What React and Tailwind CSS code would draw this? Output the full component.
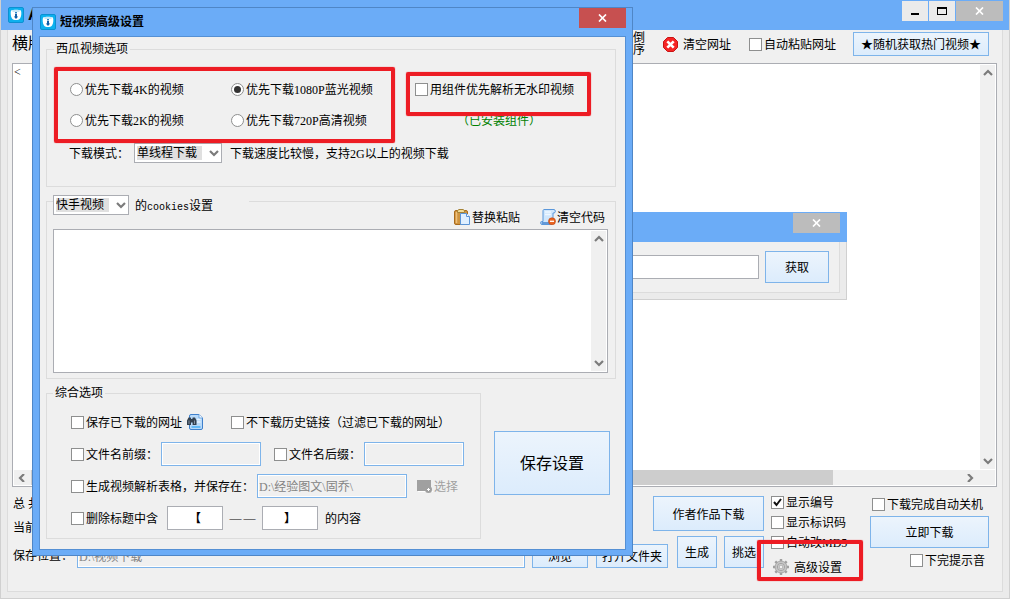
import { useState } from 'react'

const PATHS = {
  up: 'M1 6 L5 2 L9 6',
  down: 'M1 2 L5 6 L9 2',
  left: 'M7 0 L3 4 L7 8',
  right: 'M3 0 L7 4 L3 8',
}

function Chevron({ dir, className = '' }) {
  return (
    <svg viewBox="0 0 10 8" className={`h-2 w-2.5 shrink-0 text-[#7b7b7b] ${className}`} fill="none" stroke="currentColor" strokeWidth="2.2">
      <path d={PATHS[dir]} />
    </svg>
  )
}

function AppIcon() {
  return (
    <svg viewBox="0 0 16 16" className="h-4 w-4 shrink-0">
      <rect x="0.5" y="0.5" width="15" height="15" rx="1.5" fill="#0cb0ee" stroke="#0b90d2" />
      <path d="M3 3.5 C5 2.5 11 2.5 13 3.5 C13.6 6 13.4 9.500 12 11.500 C10.500 13.500 5.500 13.500 4 11.500 C2.600 9.500 2.400 6 3 3.500Z" fill="#fff" />
      <path d="M4.500 4 H11.500" stroke="#8fd0ee" />
      <path d="M8 5 V6.600" stroke="#1b78bd" strokeWidth="1.800" />
      <path d="M7 7 H9 V9.500 H10.200 L8 12 L5.800 9.500 H7Z" fill="#0f5fa8" />
    </svg>
  )
}

function CloseGlyph() {
  return (
    <svg viewBox="0 0 9 8" className="h-2 w-[9px]" stroke="#fff" strokeWidth="1.7">
      <path d="M1 0.500 L8 7.500 M8 0.500 L1 7.500" />
    </svg>
  )
}

function CloseButton({ active }) {
  return (
    <button
      aria-label="关闭"
      className={`flex h-5 w-[47px] items-center justify-center ${active ? 'bg-[#c75050]' : 'bg-[#bcbcbc]'}`}
    >
      <CloseGlyph />
    </button>
  )
}

function ClearIcon() {
  return (
    <svg viewBox="0 0 15 15" className="h-[15px] w-[15px]">
      <path d="M4.500 0.500 H10.500 L14.500 4.500 V10.500 L10.500 14.500 H4.500 L0.500 10.500 V4.500Z" fill="#f52525" stroke="#c81414" />
      <path d="M4.300 4.300 L10.700 10.700 M10.700 4.300 L4.300 10.700" stroke="#fff" strokeWidth="2.600" />
    </svg>
  )
}

function PasteIcon() {
  return (
    <svg viewBox="0 0 16 16" className="h-4 w-4">
      <rect x="0.500" y="1.500" width="13" height="14" rx="1.500" fill="#cf9440" stroke="#a86a1c" />
      <path d="M2.500 3 V14" stroke="#eec07c" strokeWidth="1.500" />
      <path d="M3.500 3.500 V1.500 L5 0.500 H9 L10.500 1.500 V3.500Z" fill="#f3dc98" stroke="#a58235" />
      <path d="M6.500 4.500 H12.500 L15.500 7.500 V15.500 H6.500Z" fill="#dfefff" stroke="#5b94d6" />
      <path d="M12.500 4.500 V7.500 H15.500" fill="#fff" stroke="#5b94d6" />
    </svg>
  )
}

function ScriptDeleteIcon() {
  return (
    <svg viewBox="0 0 16 16" className="h-4 w-4">
      <path d="M4 0.500 H14 C15.800 0.500 15.800 4 14 4 H13 V13 C13 15 12 15.500 10.500 15.500 H2 C0 15.500 0 12.500 1.500 12.500 H3 V2 C3 1 3.500 0.500 4 0.500Z" fill="#cfe6fc" stroke="#5a97da" />
      <path d="M5 3 H11 M5 5.500 H11" stroke="#eef7ff" strokeWidth="1.500" />
      <path d="M1.500 14 H9" stroke="#3f7fcb" strokeWidth="1.500" />
      <circle cx="12" cy="12.300" r="3.500" fill="#ea6420" stroke="#b9410c" strokeWidth="0.600" />
      <path d="M10 12.300 H14" stroke="#fff" strokeWidth="1.300" />
    </svg>
  )
}

function FindPageIcon() {
  return (
    <svg viewBox="0 0 16 16" className="h-4 w-4">
      <path d="M2.500 2 Q2.500 0.500 4 0.500 H12 L15.500 4 V14 Q15.500 15.500 14 15.500 H4 Q2.500 15.500 2.500 14Z" fill="#b9daf9" stroke="#3f80cc" />
      <path d="M12 0.500 V4 H15.500" fill="#fff" stroke="#6aa5e2" />
      <path d="M10 5.500 H13.500 M10 8 H13.500" stroke="#e8f4ff" strokeWidth="1.300" />
      <path d="M4.500 13 H13.500" stroke="#4fb2f5" strokeWidth="1.600" />
      <path d="M1.500 3.500 H3.800 L4.200 5 H5.300 L5.700 3.500 H8 L9.500 6.500 V11 H5.600 V8.500 H4 V11 H0 V6.500Z" fill="#34414f" />
      <path d="M2 6.500 V10 M7.500 6.500 V10" stroke="#8292a3" />
    </svg>
  )
}

function ChooseIcon() {
  return (
    <svg viewBox="0 0 16 14" className="h-3.5 w-4">
      <path d="M1 12.500 H16" stroke="#fff" />
      <rect x="0" y="1" width="14" height="11" fill="#a0a0a0" />
      <circle cx="11.500" cy="10.500" r="3.500" fill="#a0a0a0" />
      <path d="M11.500 9 V12 M10 10.500 H13" stroke="#fff" />
    </svg>
  )
}

function GearIcon() {
  return (
    <svg viewBox="0 0 16 16" className="h-4 w-4">
      <g stroke="#a0a0a0" strokeWidth="2.400">
        <path d="M8 0 V16 M0 8 H16 M2.300 2.300 L13.700 13.700 M13.700 2.300 L2.300 13.700" />
      </g>
      <circle cx="8" cy="8" r="6" fill="#c6c6c6" stroke="#a0a0a0" strokeWidth="0.800" />
      <circle cx="8" cy="8" r="3.600" fill="#d6d6d6" stroke="#979797" strokeWidth="0.800" />
      <circle cx="8" cy="8" r="1.900" fill="#f2f2f2" stroke="#979797" strokeWidth="0.700" />
    </svg>
  )
}

function Check({ label, defaultChecked = false, className = '' }) {
  return (
    <label className={`flex items-center gap-0.5 whitespace-nowrap ${className}`}>
      <span className="relative flex h-[13px] w-[13px] shrink-0">
        <input type="checkbox" defaultChecked={defaultChecked} className="peer h-[13px] w-[13px] appearance-none border border-[#8e8f8f] bg-white" />
        <svg viewBox="0 0 13 13" className="pointer-events-none absolute inset-0 hidden peer-checked:block" fill="none" stroke="#111" strokeWidth="2">
          <path d="M3 6 L5.500 9 L10 3" />
        </svg>
      </span>
      <span className="pt-0.5">{label}</span>
    </label>
  )
}

function Radio({ label, value, current, onChange }) {
  return (
    <label className="flex items-center gap-0.5 whitespace-nowrap">
      <span className="relative flex h-[13px] w-[13px] shrink-0">
        <input
          type="radio"
          name="quality"
          checked={current === value}
          onChange={() => onChange(value)}
          className="peer h-[13px] w-[13px] appearance-none rounded-full border border-[#8e8f8f] bg-white"
        />
        <span className="pointer-events-none absolute inset-[3px] hidden rounded-full bg-[#333] peer-checked:block" />
      </span>
      <span className="pt-0.5">{label}</span>
    </label>
  )
}

function Button({ children, className = '' }) {
  return (
    <button className={`shrink-0 whitespace-nowrap border border-[#7eb4ea] bg-linear-to-b from-[#ecf4fc] to-[#dcecfc] pt-0.5 ${className}`}>
      {children}
    </button>
  )
}

function Select({ label, options, className = '', fill = '' }) {
  return (
    <span className={`relative flex h-5 ${className}`}>
      <select aria-label={label} className={`w-full appearance-none border border-[#abadb3] bg-white bg-linear-to-b from-[#e0e0e0] to-[#e0e0e0] bg-no-repeat pl-0.5 ${fill}`}>
        {options.map((o) => (
          <option key={o}>{o}</option>
        ))}
      </select>
      <Chevron dir="down" className="pointer-events-none absolute top-[6px] right-[3px]" />
    </span>
  )
}

function Scrollbar() {
  return (
    <div className="m-px flex w-[15px] shrink-0 flex-col items-center justify-between bg-[#f0f0f0] py-1">
      <Chevron dir="up" />
      <Chevron dir="down" />
    </div>
  )
}

// red frame drawn over the controls to point at
function Highlight({ className }) {
  return <div className={`pointer-events-none absolute rounded-[2px] border-4 border-[#ed1c24] shadow-[0_0_1px_#ed1c24] ${className}`} />
}

const field = 'border border-[#7eb4ea] bg-[#f0f0f0] shadow-[inset_0_0_0_1px_#fff] h-6 min-w-0 px-px text-[#838383]'

function FetchWindow() {
  return (
    <div className="absolute top-[212px] left-[399px] w-[447px] border-r border-b border-[#d0d0d0] bg-[#ebebeb]">
      <div className="-mr-px flex h-[30px] justify-end bg-[#6bacf7] pt-px pr-[7px]">
        <CloseButton />
      </div>
      <div className="mr-1.5 mb-1.5 ml-[7px] flex items-center gap-1.5 border-r border-b border-[#dcdcdc] bg-[#f0f0f0] py-[9px] pr-2.5 pl-4">
        <input aria-label="地址" className="h-6 min-w-0 flex-1 border border-[#abadb3] bg-white px-1" />
        <Button className="h-8 w-16">获取</Button>
      </div>
    </div>
  )
}

function SettingsDialog() {
  const [quality, setQuality] = useState('1080')

  return (
    <div className="absolute top-[7px] left-[31px] w-[601px] border border-[#4f86c6] bg-[#6bacf7] px-1.5 pb-[5px]">
      <div className="flex h-7 items-start">
        <div className="flex h-7 flex-1 items-center gap-1 pl-px font-bold">
          <AppIcon />
          <h1>短视频高级设置</h1>
        </div>
        <CloseButton active />
      </div>

      <div className="border border-[#5590d4] bg-[#f0f0f0] pt-[3px] pr-[9px] pb-2.5 pl-1.5">
        <fieldset className="relative border border-[#dcdcdc] pb-[23px] pl-[23px]">
          <legend className="-ml-4 px-0.5 leading-[18px]">西瓜视频选项</legend>
          <div className="grid grid-cols-[161px_184px_1fr] pt-[22px] leading-[17px]">
            <Radio label="优先下载4K的视频" value="4k" current={quality} onChange={setQuality} />
            <Radio label="优先下载1080P蓝光视频" value="1080" current={quality} onChange={setQuality} />
            <Check label="用组件优先解析无水印视频" />
          </div>
          <div className="grid grid-cols-[161px_226px_1fr] pt-3 leading-[17px]">
            <Radio label="优先下载2K的视频" value="2k" current={quality} onChange={setQuality} />
            <Radio label="优先下载720P高清视频" value="720" current={quality} onChange={setQuality} />
            <span className="pt-0.5 text-[#008000]">（已安装组件）</span>
          </div>
          <div className="-ml-px flex items-center pt-[13px]">
            <span className="w-[65px] pt-0.5">下载模式：</span>
            <Select label="下载模式" options={['单线程下载', '多线程下载']} className="w-[88px]" fill="bg-[length:65px_14px] bg-[position:2px_2px]" />
            <span className="pt-0.5 pl-2">下载速度比较慢，支持2G以上的视频下载</span>
          </div>
          <Highlight className="top-[9px] left-[7px] h-[76px] w-[341px]" />
          <Highlight className="top-3.5 left-[359px] h-11 w-[185px]" />
        </fieldset>

        <fieldset className="border border-[#dcdcdc] pr-[7px] pb-[5px] pl-1.5">
          <legend className="flex w-[196px] items-center gap-1.5 pt-2">
            <Select label="平台" options={['快手视频', '抖音视频']} className="w-[76px]" fill="bg-[length:53px_14px] bg-[position:2px_2px]" />
            <span className="pt-0.5">
              的<span className="font-['Liberation_Mono'] text-[10px]">cookies</span>设置
            </span>
          </legend>
          <div className="-mt-2 flex h-5 justify-end gap-5 pr-[3px]">
            <button className="flex items-center gap-0.5">
              <PasteIcon />
              <span className="pt-0.5">替换粘贴</span>
            </button>
            <button className="flex items-center gap-px">
              <ScriptDeleteIcon />
              <span className="pt-0.5">清空代码</span>
            </button>
          </div>
          <div className="mt-0.5 flex h-36 border border-[#abadb3] bg-white">
            <textarea aria-label="cookies" className="min-w-0 flex-1 resize-none p-1" />
            <Scrollbar />
          </div>
        </fieldset>

        <div className="mt-[5px] flex items-start gap-[13px]">
          <fieldset className="w-[435px] border border-[#dcdcdc] pb-2 pl-6">
            <legend className="-ml-[18px] px-0.5 leading-[18px]">综合选项</legend>
            <div className="flex flex-col gap-2 pt-2">
              <div className="flex h-6 items-center">
                <Check label="保存已下载的网址" />
                <button aria-label="查看网址" className="mr-7 ml-[5px]">
                  <FindPageIcon />
                </button>
                <Check label="不下载历史链接（过滤已下载的网址）" />
              </div>
              <div className="flex h-6 items-center">
                <Check label="文件名前缀：" className="w-[90px]" />
                <input aria-label="文件名前缀" className={`w-[100px] ${field}`} />
                <Check label="文件名后缀：" className="ml-[13px] w-[90px]" />
                <input aria-label="文件名后缀" className={`w-[100px] ${field}`} />
              </div>
              <div className="flex h-6 items-center">
                <Check label="生成视频解析表格，并保存在：" className="w-[186px]" />
                <input aria-label="保存目录" defaultValue="D:\经验图文\固乔\" className={`w-[150px] ${field}`} />
                <button disabled className="ml-2.5 flex items-center gap-px text-[#a0a0a0]">
                  <ChooseIcon />
                  <span className="pt-0.5">选择</span>
                </button>
              </div>
              <div className="flex h-6 items-center">
                <Check label="删除标题中含" className="w-24" />
                <input aria-label="起始符号" defaultValue="【" className="h-6 w-14 border border-[#abadb3] bg-white text-center font-bold" />
                <span className="flex w-[39px] justify-center gap-0.5">
                  <span>—</span>
                  <span>—</span>
                </span>
                <input aria-label="结束符号" defaultValue="】" className="h-6 w-14 border border-[#abadb3] bg-white text-center font-bold" />
                <span className="pt-0.5 pl-[7px]">的内容</span>
              </div>
            </div>
          </fieldset>
          <Button className="mt-[47px] h-16 w-[116px] text-base">保存设置</Button>
        </div>
      </div>
    </div>
  )
}

function Toolbar() {
  return (
    <div className="flex h-[33px] items-center justify-between pr-2 pb-[5px]">
      <span className="text-base">横版</span>
      <div className="flex items-center">
        <span className="mr-[18px] w-3 leading-3">倒序</span>
        <button className="mr-[18px] flex items-center gap-[5px]">
          <ClearIcon />
          <span className="pt-0.5">清空网址</span>
        </button>
        <Check label="自动粘贴网址" className="mr-[17px]" />
        <Button className="h-6 w-[136px]">★随机获取热门视频★</Button>
      </div>
    </div>
  )
}

function UrlList() {
  return (
    <div className="flex min-h-0 flex-1 flex-col border border-[#abadb3] bg-white">
      <div className="flex min-h-0 flex-1">
        <div className="flex-1 p-px leading-[14px]">&lt;</div>
        <Scrollbar />
      </div>
      <div className="mx-px mb-px flex h-[15px] shrink-0 items-center bg-[#f0f0f0] pl-[3px]">
        <Chevron dir="left" />
        <div className="ml-1 h-full w-[82%] bg-[#cdcdcd]" />
        <Chevron dir="right" className="mr-5 ml-auto" />
      </div>
    </div>
  )
}

function BottomPanel() {
  return (
    <div className="relative flex items-start pt-[5px] pr-2 pb-3">
      <div className="min-w-0 flex-1">
        <div className="flex h-11 items-start justify-between">
          <div className="pl-px leading-6">
            <p>总 共：</p>
            <p>当前进度：</p>
          </div>
          <Button className="mt-1 h-[35px] w-[111px]">作者作品下载</Button>
        </div>
        <div className="flex items-end">
          <label htmlFor="save-path" className="w-[65px] pl-px leading-6">保存位置：</label>
          <input id="save-path" defaultValue="D:\视频下载" className={`flex-1 ${field}`} />
          <Button className="ml-[7px] h-6 w-14">浏览</Button>
          <Button className="ml-2 h-6 w-[72px]">打开文件夹</Button>
          <Button className="ml-[9px] h-8 w-10">生成</Button>
          <Button className="ml-[7px] h-8 w-10">挑选</Button>
        </div>
      </div>
      <div className="ml-[7px] w-[99px]">
        <Check label="显示编号" defaultChecked className="h-5" />
        <Check label="显示标识码" className="h-5" />
        <Check label="自动改MD5" className="h-5" />
        <button className="mt-[3px] flex h-6 items-center gap-[5px] pl-0.5">
          <GearIcon />
          <span className="pt-0.5">高级设置</span>
        </button>
      </div>
      <div className="flex w-[119px] flex-col items-end">
        <Check label="下载完成自动关机" className="h-6 pr-1.5" />
        <Button className="h-8 w-full">立即下载</Button>
        <Check label="下完提示音" className="h-6 pr-1" />
      </div>
      <Highlight className="top-[53px] right-[134px] h-[41px] w-[106px]" />
    </div>
  )
}

export default function App() {
  return (
    <div className="relative flex h-screen flex-col overflow-hidden border-x border-b border-[#d0d0d0] bg-[#ebebeb] px-1.5 pb-1.5 font-['Liberation_Serif','Noto_Sans_CJK_SC',sans-serif] text-xs text-black">
      <header className="-mx-[7px] flex h-[30px] shrink-0 items-start bg-[#6bacf7] pl-2">
        <div className="flex h-[30px] flex-1 items-center gap-1 font-bold">
          <AppIcon />
          <span className="font-['Liberation_Sans'] text-base">A</span>
        </div>
        <div className="flex gap-px pt-px pr-[7px]">
          <button aria-label="最小化" className="flex h-5 w-[26px] items-end justify-center bg-[#ebebeb] pb-1.5">
            <span className="h-0.5 w-2 bg-black" />
          </button>
          <button aria-label="最大化" className="flex h-5 w-[26px] items-center justify-center bg-[#ebebeb]">
            <span className="h-2 w-2.5 border border-t-2 border-black" />
          </button>
          <CloseButton />
        </div>
      </header>
      <main className="flex min-h-0 flex-1 flex-col border-x border-b border-[#dcdcdc] bg-[#f0f0f0] pr-[5px] pl-1">
        <Toolbar />
        <UrlList />
        <BottomPanel />
      </main>
      <FetchWindow />
      <SettingsDialog />
    </div>
  )
}
